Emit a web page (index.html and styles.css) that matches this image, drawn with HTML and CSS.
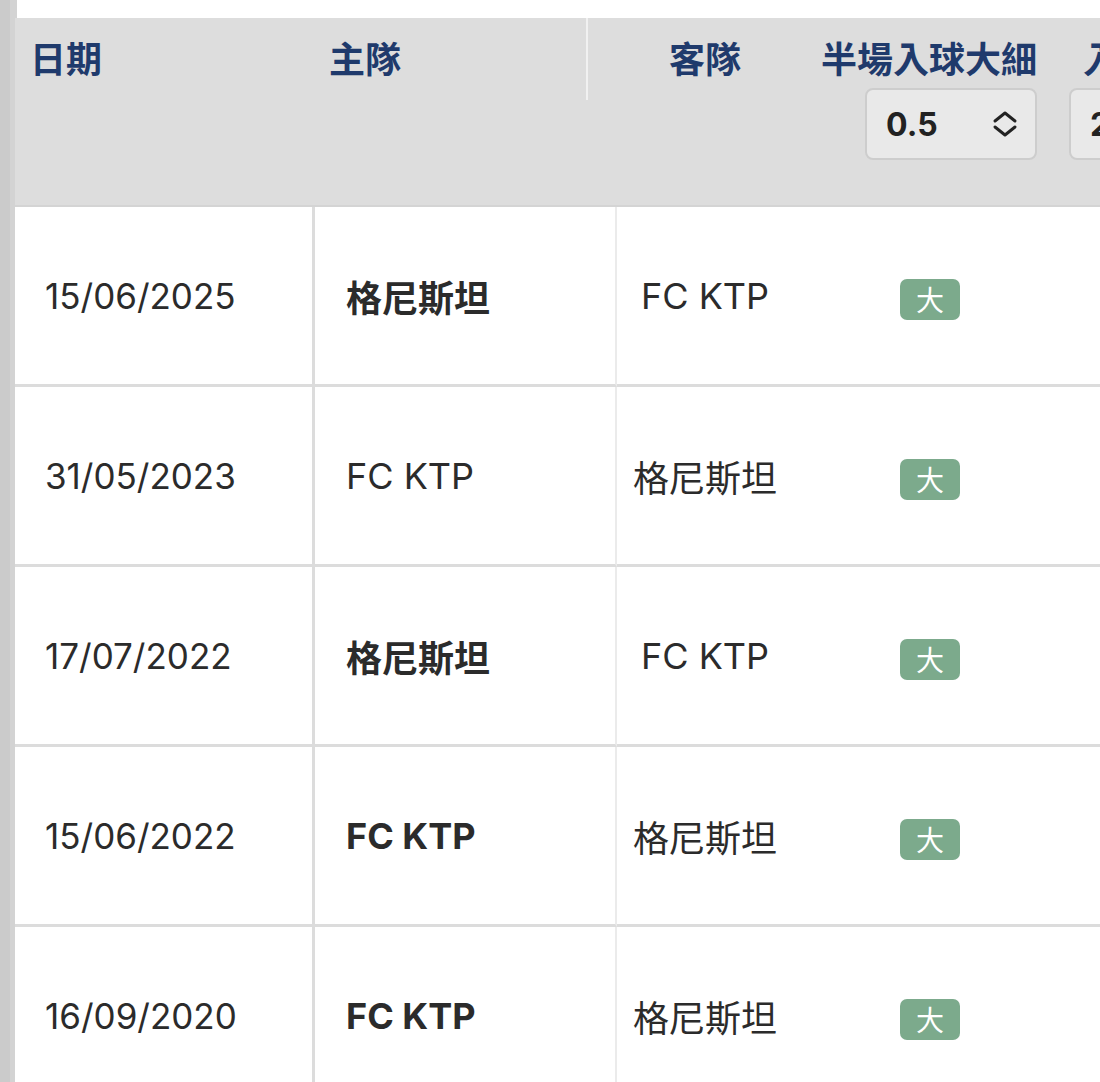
FILE: index.html
```html
<!DOCTYPE html>
<html lang="zh-Hant">
<head>
<meta charset="utf-8">
<title>對賽往績</title>
<link rel="stylesheet" href="styles.css">
</head>
<body>
<div class="page">
  <div class="rail"></div>
  <div class="main">
    <div class="topgap"></div>
    <div class="head">
      <div class="hcell h-date">日期</div>
      <div class="hcell h-home">主隊</div>
      <div class="hdivider"></div>
      <div class="hcell h-away">客隊</div>
      <div class="hcell h-half">
        <span>半場入球大細</span>
        <div class="select"><span class="sel-val">0.5</span>
          <svg class="chev" width="26" height="26" viewBox="0 0 26 26"><path d="M3 10 L13 2 L23 10 M3 16 L13 24 L23 16" fill="none" stroke="#222" stroke-width="3" stroke-linecap="round" stroke-linejoin="round"/></svg>
        </div>
      </div>
      <div class="hcell h-full">
        <span>入球大細</span>
        <div class="select"><span class="sel-val">2.5</span>
          <svg class="chev" width="26" height="26" viewBox="0 0 26 26"><path d="M3 10 L13 2 L23 10 M3 16 L13 24 L23 16" fill="none" stroke="#222" stroke-width="3" stroke-linecap="round" stroke-linejoin="round"/></svg>
        </div>
      </div>
    </div>
    <div class="rows">
      <div class="row">
        <div class="cell c-date">15/06/2025</div>
        <div class="cell c-home strong">格尼斯坦</div>
        <div class="cell c-away">FC KTP</div>
        <div class="cell c-half"><span class="badge">大</span></div>
        <div class="cell c-full"></div>
      </div>
      <div class="row">
        <div class="cell c-date">31/05/2023</div>
        <div class="cell c-home">FC KTP</div>
        <div class="cell c-away">格尼斯坦</div>
        <div class="cell c-half"><span class="badge">大</span></div>
        <div class="cell c-full"></div>
      </div>
      <div class="row">
        <div class="cell c-date">17/07/2022</div>
        <div class="cell c-home strong">格尼斯坦</div>
        <div class="cell c-away">FC KTP</div>
        <div class="cell c-half"><span class="badge">大</span></div>
        <div class="cell c-full"></div>
      </div>
      <div class="row">
        <div class="cell c-date">15/06/2022</div>
        <div class="cell c-home strong">FC KTP</div>
        <div class="cell c-away">格尼斯坦</div>
        <div class="cell c-half"><span class="badge">大</span></div>
        <div class="cell c-full"></div>
      </div>
      <div class="row">
        <div class="cell c-date">16/09/2020</div>
        <div class="cell c-home strong">FC KTP</div>
        <div class="cell c-away">格尼斯坦</div>
        <div class="cell c-half"><span class="badge">大</span></div>
        <div class="cell c-full"></div>
      </div>
    </div>
  </div>
</div>
</body>
</html>
```
FILE: styles.css
```css
html, body {
  margin: 0;
  padding: 0;
  overflow: hidden;
  background: #fff;
}
body {
  font-family: Inter, "Noto Sans CJK TC", sans-serif;
  color: #2b2b2b;
}
.page {
  display: flex;
  width: 1400px;
  height: 1082px;
}
.rail {
  flex: none;
  width: 15px;
  background: linear-gradient(to right, #cbcbcb 0, #cbcbcb 10px, #d3d3d3 10px, #d3d3d3 15px);
}
.main {
  flex: none;
  width: 1385px;
}
.topgap {
  height: 18px;
  background: #fff;
  border-left: 2px solid #d3d3d3;
}
.head {
  display: flex;
  height: 189px;
  box-sizing: border-box;
  background: #dddddd;
  border-bottom: 2px solid #d4d4d4;
  font-family: "Noto Sans CJK TC", sans-serif;
  font-weight: 700;
  font-size: 36px;
  line-height: 43px;
  color: #1f3a6c;
}
.hcell {
  flex: none;
  box-sizing: border-box;
  padding-top: 18px;
}
.h-date { width: 300px; padding-left: 15px; }
.h-home { width: 271px; padding-left: 14px; }
.hdivider {
  flex: none;
  width: 2px;
  height: 82px;
  background: #f1f1f1;
}
.h-away { width: 205px; padding-left: 81px; }
.h-half {
  width: 274px;
  display: flex;
  flex-direction: column;
  align-items: flex-end;
  padding-right: 30px;
}
.h-full {
  width: 300px;
  padding-left: 2px;
  display: flex;
  flex-direction: column;
  align-items: flex-start;
}
.h-full > span { padding-left: 14px; }
.select {
  margin-top: 9px;
  width: 172px;
  height: 72px;
  box-sizing: border-box;
  border: 2px solid #cdcdcd;
  border-radius: 8px;
  background: #e9e9e9;
  display: flex;
  align-items: center;
  justify-content: space-between;
  padding: 0 17px 0 19px;
}
.sel-val {
  font-family: Inter, sans-serif;
  font-weight: 700;
  font-size: 32px;
  color: #222;
}
.chev { display: block; }
.rows { display: flex; flex-direction: column; }
.row {
  display: grid;
  grid-template-columns: 300px 302px 176px 274px 333px;
}
.cell {
  box-sizing: border-box;
  height: 180px;
  border-bottom: 3px solid #dcdcdc;
  display: flex;
  align-items: center;
  font-size: 36px;
}
.c-date { padding-left: 30px; border-right: 3px solid #dcdcdc; font-size: 35px; }
.c-home { padding-left: 31px; border-right: 2px solid #ebebeb; }
.c-away { justify-content: center; }
.c-half { justify-content: center; }
.strong { font-weight: 700; }
.badge {
  display: inline-block;
  width: 60px;
  height: 41px;
  margin-top: 7px;
  border-radius: 7px;
  background: #7caa8c;
  color: #fff;
  font-family: "Noto Sans CJK TC", sans-serif;
  font-size: 28px;
  line-height: 41px;
  text-align: center;
}
```
